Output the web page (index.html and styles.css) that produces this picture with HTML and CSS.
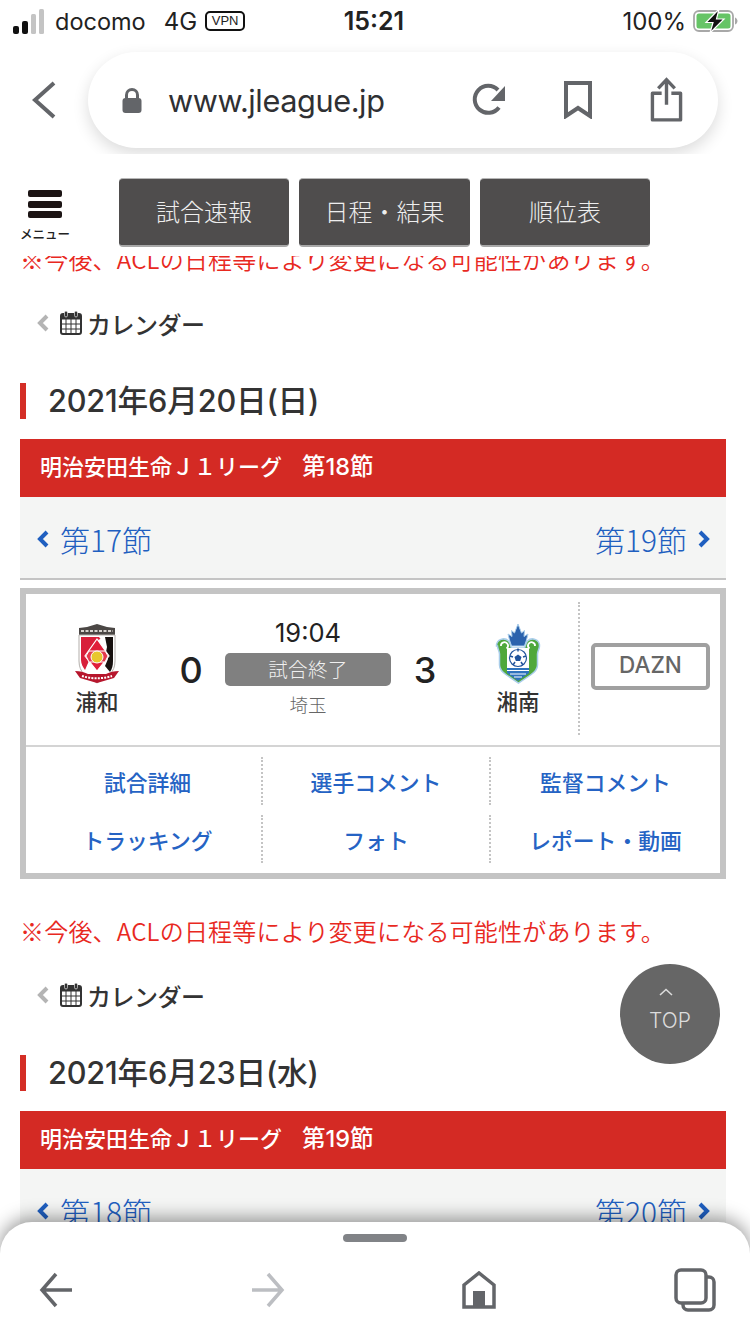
FILE: index.html
```html
<!DOCTYPE html>
<html lang="ja">
<head>
<meta charset="utf-8">
<title>Jリーグ 試合速報</title>
<link rel="stylesheet" href="styles.css">
</head>
<body>
<div class="phone">
  <div class="status">
    <div class="status-left">
      <svg class="signal" width="32" height="34" viewBox="0 0 32 34"><rect x="1" y="22" width="6" height="8" rx="2" fill="#111"/><rect x="10" y="17" width="6" height="13" rx="2" fill="#111"/><rect x="19" y="10" width="5" height="20" rx="1.5" fill="#c4c4c4"/><rect x="27" y="5" width="5" height="25" rx="1.5" fill="#c4c4c4"/></svg>
      <span class="carrier">docomo</span>
      <span class="net">4G</span>
      <span class="vpn">VPN</span>
    </div>
    <div class="clock">15:21</div>
    <div class="status-right">
      <span class="pct">100%</span>
      <svg width="45" height="24" viewBox="0 0 45 24"><rect x="1" y="2" width="39" height="20" rx="5" fill="none" stroke="#a8a8a8" stroke-width="1.8"/><rect x="3.500" y="4.500" width="34" height="15" rx="2.500" fill="#66c466"/><path d="M42 8.500v7c1.500-.5 2.500-2 2.500-3.500S43.500 9 42 8.500z" fill="#a8a8a8"/><path d="M26 0 13 13.500h7L17 24l14-14h-7.500z" fill="#111" stroke="#fff" stroke-width="1.200"/></svg>
    </div>
  </div>

  <div class="browser">
    <svg class="browser-back" width="26" height="38" viewBox="0 0 26 38"><path d="M23 2 4 19l19 17" fill="none" stroke="#636569" stroke-width="4"/></svg>
    <div class="pill">
      <svg width="22" height="26" viewBox="0 0 22 26"><path d="M5.500 12V8a5.500 5.500 0 0 1 11 0v4" fill="none" stroke="#636569" stroke-width="3"/><rect x="1.500" y="11" width="19" height="15" rx="3" fill="#636569"/></svg>
      <span class="url">www.jleague.jp</span>
      <svg class="pill-reload" width="36" height="36" viewBox="0 0 36 36"><path d="M27 25.500A13.500 13.500 0 1 1 26 8" fill="none" stroke="#636569" stroke-width="4"/><path d="M33 4v15H19z" fill="#636569"/></svg>
      <svg class="pill-mark" width="30" height="38" viewBox="0 0 30 38"><path d="M3 2h24v33L15 27 3 35z" fill="none" stroke="#636569" stroke-width="4"/></svg>
      <svg class="pill-share" width="33" height="46" viewBox="0 0 34 46"><path d="M17 2v26M8.500 11 17 2l8.500 9" fill="none" stroke="#636569" stroke-width="3.500"/><path d="M12 16H2.500v27.500h29V16H22" fill="none" stroke="#636569" stroke-width="3.500" stroke-linejoin="round"/></svg>
    </div>
  </div>

  <header class="site">
    <div class="menu">
      <span class="menu-bar"></span><span class="menu-bar"></span><span class="menu-bar"></span>
      <span class="menu-label">メニュー</span>
    </div>
    <nav class="tabs">
      <a class="tab tab-a">試合速報</a>
      <a class="tab tab-b">日程・結果</a>
      <a class="tab tab-a">順位表</a>
    </nav>
  </header>

  <main class="content">
    <section class="day day-first">
      <p class="notice">※今後、ACLの日程等により変更になる可能性があります。</p>
      <div class="calendar">
        <svg class="chev-gray" width="12" height="18" viewBox="0 0 12 18"><path d="M10 2 3 9l7 7" fill="none" stroke="#b4b4b4" stroke-width="4"/></svg>
        <svg width="22" height="24" viewBox="0 0 22 24"><use href="#cal"/></svg>
        <span>カレンダー</span>
      </div>
      <h2 class="date">2021年6月20日(日)</h2>
      <div class="league">明治安田生命Ｊ１リーグ　<span class="league-round">第18節</span></div>
      <div class="rounds">
        <a class="round"><svg width="12" height="18" viewBox="0 0 12 18"><path d="M10 2 3 9l7 7" fill="none" stroke="#1f5fc0" stroke-width="4"/></svg>第17節</a>
        <a class="round">第19節<svg width="12" height="18" viewBox="0 0 12 18"><path d="m2 2 7 7-7 7" fill="none" stroke="#1f5fc0" stroke-width="4"/></svg></a>
      </div>
      <article class="match">
        <div class="match-top">
          <div class="team team-home">
            <svg width="46" height="60" viewBox="0 0 46 60">
              <path d="M5 4 13 3l10-3 10 3 8 1v9H5z" fill="#4b4745"/>
              <path d="M7 7h32" stroke="#d8d4cf" stroke-width="2" stroke-dasharray="3 1.500"/>
              <path d="M5 11h36v26c0 6-2 10-5 13l-13 9-13-9c-3-3-5-7-5-13z" fill="#fff" stroke="#b3aeaa" stroke-width="1"/>
              <path d="M7 13h24l-7 3L11 46c-2-3-4-6-4-10z" fill="#d81f3a"/>
              <path d="M25 13 31 13 32 22z" fill="#fff"/>
              <path d="M31 13h8v24c0 5-1 8-3 11l-5-6 3-7-2-7 1-5z" fill="#17110f"/>
              <path d="M23 15 35 32 23 47 11 32z" fill="#e01f3a" stroke="#fff" stroke-width="1.200"/>
              <path d="M15 27h16l3 5-3 6H15l-3-6z" fill="#e53a4c" stroke="#fff" stroke-width="1"/>
              <circle cx="23" cy="33" r="6" fill="#e8c72e" stroke="#fff" stroke-width="1"/>
              <path d="M1 47c5 0 9 1 13 3h18c4-2 8-3 13-3l-5 7-17 5-17-5z" fill="#b7162d"/>
              <path d="M8 52c9 3 21 3 30 0" fill="none" stroke="#fff" stroke-width="2" stroke-dasharray="2 1.200"/>
            </svg>
            <span class="team-name">浦和</span>
          </div>
          <div class="score score-home">0</div>
          <div class="center">
            <div class="kickoff">19:04</div>
            <div class="state">試合終了</div>
            <div class="venue">埼玉</div>
          </div>
          <div class="score score-away">3</div>
          <div class="team team-away">
            <svg width="46" height="60" viewBox="0 0 46 60">
              <path d="M23 0l3.500 9 3-2.500-.5 6 4-2.500-1.500 6-2 6H16.500l-2-6-1.500-6 4 2.500-.5-6 3 2.500z" fill="#2a62ad" stroke="#a9cdea" stroke-width="1"/>
              <path d="M1.500 22c0-7 8-9 12-5 2 2 2 5 3 7h13c1-2 1-5 3-7 4-4 12-2 12 5 0 3-2 5-2 8v11c0 5-4 8-7 10l-12 8-12-8c-3-2-7-5-7-10V30c0-3-2-5-2-8z" fill="#4fa83b" stroke="#a9cdea" stroke-width="1.500"/>
              <path d="M6 22a3.500 3.500 0 1 1 5.500 2.500" fill="none" stroke="#fff" stroke-width="1.800"/>
              <path d="M40 22a3.500 3.500 0 1 0-5.500 2.500" fill="none" stroke="#fff" stroke-width="1.800"/>
              <path d="M12 24h22v20H12z" fill="#fff"/>
              <circle cx="23" cy="34" r="8.500" fill="#fff" stroke="#20539b" stroke-width="1.200"/>
              <path d="m23 30.500 3.500 2.500-1.300 4h-4.400L19.500 33z" fill="#20539b"/>
              <path d="M23 24.500v3M15 32l3 1M31 32l-3 1M18 41l2-3M28 41l-2-3" stroke="#20539b" stroke-width="1.500"/>
              <path d="M12 44h22v5l-11 8-11-8z" fill="#2e73bd"/>
              <path d="M12 46.500h22M15 50h16M19 53h8" stroke="#fff" stroke-width="1.200"/>
            </svg>
            <span class="team-name">湘南</span>
          </div>
          <div class="broadcast"><span class="dazn">DAZN</span></div>
        </div>
        <div class="links">
          <a class="link">試合詳細</a>
          <a class="link">選手コメント</a>
          <a class="link">監督コメント</a>
          <a class="link">トラッキング</a>
          <a class="link">フォト</a>
          <a class="link">レポート・動画</a>
        </div>
      </article>
    </section>

    <section class="day">
      <p class="notice">※今後、ACLの日程等により変更になる可能性があります。</p>
      <div class="calendar">
        <svg class="chev-gray" width="12" height="18" viewBox="0 0 12 18"><path d="M10 2 3 9l7 7" fill="none" stroke="#b4b4b4" stroke-width="4"/></svg>
        <svg width="22" height="24" viewBox="0 0 22 24"><use href="#cal"/></svg>
        <span>カレンダー</span>
      </div>
      <h2 class="date">2021年6月23日(水)</h2>
      <div class="league">明治安田生命Ｊ１リーグ　<span class="league-round">第19節</span></div>
      <div class="rounds">
        <a class="round"><svg width="12" height="18" viewBox="0 0 12 18"><path d="M10 2 3 9l7 7" fill="none" stroke="#1f5fc0" stroke-width="4"/></svg>第18節</a>
        <a class="round">第20節<svg width="12" height="18" viewBox="0 0 12 18"><path d="m2 2 7 7-7 7" fill="none" stroke="#1f5fc0" stroke-width="4"/></svg></a>
      </div>
    </section>
  </main>

  <a class="to-top">
    <svg class="to-top-mark" width="14" height="8" viewBox="0 0 14 8"><path d="M1 7l6-5.500L13 7" fill="none" stroke="#dcdcdc" stroke-width="1.600"/></svg>
    <span>TOP</span>
  </a>

  <footer class="sheet">
    <span class="handle"></span>
    <div class="sheet-icons">
      <svg width="34" height="36" viewBox="0 0 34 36"><path d="M33 18H4M17 2 3 18l14 16" fill="none" stroke="#636569" stroke-width="3.500"/></svg>
      <svg width="34" height="36" viewBox="0 0 34 36"><path d="M1 18h29M17 2l14 16-14 16" fill="none" stroke="#bcbec2" stroke-width="3.500"/></svg>
      <svg width="34" height="38" viewBox="0 0 34 38"><path d="M2 36V14L17 2l15 12v22z" fill="none" stroke="#636569" stroke-width="3.500"/><rect x="11" y="20" width="12" height="16" fill="#636569"/></svg>
      <svg width="42" height="44" viewBox="0 0 42 44"><rect x="9" y="9" width="31" height="33" rx="5" fill="none" stroke="#636569" stroke-width="3.500"/><rect x="2" y="2" width="30" height="33" rx="5" fill="#fff" stroke="#636569" stroke-width="3.500"/></svg>
    </div>
  </footer>

  <svg class="defs" width="0" height="0"><defs>
    <g id="cal"><rect x="1" y="3" width="20" height="20" rx="2" fill="none" stroke="#333" stroke-width="2"/><path d="M1 8h20M1 13h20M1 18h20M6 8v15M11 8v15M16 8v15" stroke="#333" stroke-width="1" fill="none"/><path d="M1 3h20v5H1z" fill="#333"/><rect x="4.500" y="0" width="3" height="6" rx="1.500" fill="#333" stroke="#fff" stroke-width=".6"/><rect x="14.500" y="0" width="3" height="6" rx="1.500" fill="#333" stroke="#fff" stroke-width=".6"/></g>
  </defs></svg>
</div>
</body>
</html>
```

FILE: styles.css
```css
* { box-sizing: border-box; }
html, body { margin: 0; padding: 0; }
body { width: 750px; height: 1334px; overflow: hidden; background: #fff; font-family: "Noto Sans CJK JP", "Noto Sans", sans-serif; color: #333; }
p, h2 { margin: 0; }
.phone { position: relative; width: 750px; height: 1334px; overflow: hidden; display: flex; flex-direction: column; background: #fff; }
.defs { position: absolute; }

/* status bar */
.status { flex: none; height: 42px; display: grid; grid-template-columns: 1fr auto 1fr; align-items: center; padding: 0 12px 0 12px; font-family: "Inter", "Liberation Sans", sans-serif; font-size: 24px; color: #222; }
.status-left { display: flex; align-items: center; }
.carrier { margin-left: 11px; font-size: 23.500px; font-weight: 400; }
.net { margin-left: 18px; }
.vpn { margin-left: 8px; width: 40px; height: 20px; border: 2px solid #111; border-radius: 5px; font-size: 13px; line-height: 16px; text-align: center; font-family: "Liberation Sans", sans-serif; }
.clock { font-weight: 600; font-size: 25px; padding-right: 2px; }
.status-right { display: flex; align-items: center; justify-content: flex-end; gap: 7px; }
.pct { font-size: 24px; }

/* browser bar */
.browser { flex: none; height: 112px; display: flex; align-items: center; padding: 10px 32px 6px 31px; }
.browser-back { flex: none; margin-right: 31px; }
.pill { flex: none; width: 630px; height: 96px; border-radius: 48px; background: #fff; box-shadow: 0 6px 16px rgba(0,0,0,.14); display: flex; align-items: center; padding-left: 33px; }
.url { margin-left: 25px; font-family: "Inter", "Liberation Sans", sans-serif; font-size: 30.700px; color: #2f3033; letter-spacing: -.4px; width: 304px; white-space: nowrap; }
.pill-reload { margin-right: 55px; }
.pill-mark { margin-right: 57px; }

/* site header */
.site { flex: none; position: relative; z-index: 2; height: 102px; background: #fff; display: flex; padding: 24px 0 0 17px; }
.menu { width: 56px; display: flex; flex-direction: column; align-items: center; padding-top: 12px; }
.menu-bar { width: 34px; height: 7px; border-radius: 2px; background: #1c1414; margin-bottom: 3.500px; }
.menu-label { font-size: 12.500px; line-height: 14px; color: #222; margin-top: 5px; white-space: nowrap; font-weight: 500; }
.tabs { margin-left: 46px; display: flex; gap: 10px; height: 69px; }
.tab { height: 69px; padding-bottom: 3px; border-radius: 4px; background: #4f4d4d; border-top: 1px solid #b6b6b6; border-bottom: 2px solid #a8a8a8; display: flex; align-items: center; justify-content: center; color: #eee; font-size: 24px; font-weight: 300; white-space: nowrap; }
.tab-a { width: 170px; }
.tab-b { width: 171px; }

/* scrolled page content */
.content { flex: 1; min-height: 0; overflow: hidden; padding: 0 24px 0 20px; }
.day-first { margin-top: -17px; }
.notice { height: 40px; font-size: 24px; line-height: 40px; color: #e8291f; white-space: nowrap; font-weight: 350; letter-spacing: .2px; }
.calendar { height: 30px; margin: 29px 0 0 17px; display: flex; align-items: center; font-size: 24px; font-weight: 500; color: #333; letter-spacing: -.5px; }
.calendar svg + svg { margin-left: 11px; }
.calendar span { margin-left: 5px; }
.chev-gray { flex: none; }
.date { height: 36px; margin-top: 45px; padding-left: 22px; border-left: 6px solid #d42e26; font-size: 30.700px; line-height: 35px; font-weight: 500; color: #333; white-space: nowrap; font-family: "Inter", "Noto Sans CJK JP", sans-serif; letter-spacing: -.2px; }
.league { height: 58px; margin-top: 20px; background: #d42a24; color: #fff; font-size: 22px; font-weight: 500; line-height: 55px; padding-left: 20px; white-space: nowrap; font-family: "Inter", "Noto Sans CJK JP", sans-serif; }
.league-round { font-size: 23.500px; margin-left: -2px; }
.rounds { height: 83px; background: #f4f5f4; border-bottom: 2px solid #c4c4c4; display: flex; justify-content: space-between; align-items: center; padding: 2px 16px 0 17px; }
.round { display: flex; align-items: center; gap: 11px; font-size: 30px; font-weight: 300; color: #1f5fc0; }

/* match card */
.match { margin-top: 8px; height: 291px; border: 6px solid #c4c4c4; background: #fff; }
.match-top { height: 153px; display: flex; border-bottom: 2px solid #d4d4d4; padding-top: 30px; position: relative; }
.team { flex: none; width: 100px; display: flex; flex-direction: column; align-items: center; }
.team-home { margin-left: 21px; }
.team-name { font-size: 21.500px; line-height: 28px; margin-top: 3px; font-weight: 500; color: #333; }
.score { flex: none; width: 50px; text-align: center; padding-top: 22px; font-family: "Inter", sans-serif; font-size: 36px; line-height: 48px; font-weight: 500; color: #222; }
.score-home { margin-left: 19px; }
.center { flex: none; width: 166px; margin: -6px 0 0 9px; display: flex; flex-direction: column; align-items: center; }
.kickoff { font-family: "Inter", sans-serif; font-size: 25.500px; line-height: 30px; margin-bottom: 5px; font-weight: 400; color: #222; }
.state { width: 166px; height: 33px; border-radius: 5px; background: #808080; color: #f0f0f0; text-align: center; font-size: 19.500px; line-height: 32px; font-weight: 300; letter-spacing: .4px; }
.venue { font-size: 18.500px; line-height: 36px; color: #666; font-weight: 300; }
.score-away { margin-left: 9px; }
.team-away { margin-left: 18px; }
.broadcast { flex: 1; margin: -22px 0 10px 10px; border-left: 2px dotted #c4c4c4; display: flex; justify-content: flex-start; padding: 41px 0 0 11px; }
.dazn { width: 119px; height: 47px; border: 4px solid #a0a0a0; border-radius: 5px; text-align: center; font-family: "Inter", sans-serif; font-size: 22.500px; line-height: 36px; font-weight: 500; color: #666; }
.links { display: grid; grid-template-columns: 235px 228px 1fr; grid-auto-rows: 58px; height: 126px; padding-top: 5px; }
.link { display: flex; align-items: center; justify-content: center; font-size: 21.800px; font-weight: 500; color: #2563c4; margin: 5px 0; }
.link:nth-child(3n+1) { padding-left: 8px; }
.link:nth-child(3n+2), .link:nth-child(3n) { border-left: 2px dotted #c4c4c4; }

.day + .day { margin-top: 32px; }

/* floating top button */
.to-top { position: absolute; left: 620px; top: 964px; width: 100px; height: 100px; border-radius: 50%; background: #666; z-index: 3; display: flex; flex-direction: column; align-items: center; padding-top: 24px; gap: 11px; color: #dcdcdc; font-family: "Inter", sans-serif; font-size: 21px; line-height: 28px; font-weight: 300; }
.to-top-mark { margin-right: 8px; }

/* bottom sheet */
.sheet { position: absolute; left: 0; right: 0; bottom: 0; height: 112px; background: #fff; border-radius: 32px 32px 0 0; box-shadow: 0 -4px 18px rgba(0,0,0,.4); z-index: 4; display: flex; flex-direction: column; align-items: center; }
.handle { flex: none; width: 64px; height: 8px; margin-top: 12px; border-radius: 4px; background: #818387; }
.sheet-icons { width: 100%; display: flex; justify-content: space-between; align-items: center; padding: 0 34px 0 39px; margin-top: 26px; }
```
